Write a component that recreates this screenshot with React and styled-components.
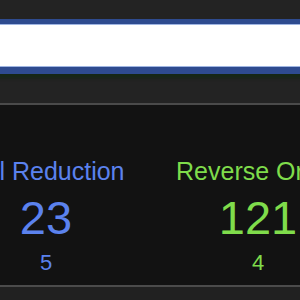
import React from "react";
import styled, { createGlobalStyle } from "styled-components";

const Global = createGlobalStyle`
  html, body { margin: 0; padding: 0; background: #212121; overflow: hidden; }
  body { font-family: "Liberation Sans", Arial, sans-serif; }
`;

const Header = styled.header`
  height: 105px;
  padding-top: 19px;
  box-sizing: border-box;
  overflow: hidden;
  background: #232323;
  border-bottom: 2px solid #4a4a4a;
`;

const SearchInput = styled.input`
  display: block;
  box-sizing: border-box;
  width: calc(100% + 20px);
  margin: 0 -10px;
  height: 55px;
  border: 5px solid #2e4b8f;
  border-bottom-width: 7px;
  background: #ffffff;
  outline: none;
  box-shadow: 0 1px 0 #9fb5e2 inset, 0 -1px 0 #9fb5e2 inset, 0 4px 3px rgba(20, 40, 20, 0.9);
  font-family: inherit;
  font-size: 20px;
`;

const Panel = styled.section`
  height: 182px;
  box-sizing: border-box;
  padding-top: 52px;
  background: #121212;
  border-bottom: 2px solid #4b4b4b;
  overflow: hidden;
`;

const Stats = styled.div`
  display: grid;
  grid-template-columns: repeat(3, 212px);
  margin-left: -60px;
`;

const Stat = styled.div`
  display: flex;
  flex-direction: column;
  align-items: center;
  color: ${(p) => p.$color};
  white-space: nowrap;
`;

const Title = styled.div`
  font-size: 25px;
  line-height: 28px;
`;

const Value = styled.div`
  margin-top: 7px;
  font-size: 47px;
  line-height: 52px;
`;

const Sub = styled.div`
  margin-top: 6px;
  font-size: 22px;
  line-height: 26px;
`;

const stats = [
  { title: "Tail Reduction", value: "23", sub: "5", color: "#5b82ee" },
  { title: "Reverse Order", value: "121", sub: "4", color: "#7fdc4b" },
  { title: "Duplicates", value: "8", sub: "2", color: "#e0b44b" },
];

export default function App() {
  return (
    <>
      <Global />
      <Header>
        <SearchInput type="text" aria-label="search" />
      </Header>
      <Panel>
        <Stats>
          {stats.map((s) => (
            <Stat key={s.title} $color={s.color}>
              <Title>{s.title}</Title>
              <Value>{s.value}</Value>
              <Sub>{s.sub}</Sub>
            </Stat>
          ))}
        </Stats>
      </Panel>
    </>
  );
}
